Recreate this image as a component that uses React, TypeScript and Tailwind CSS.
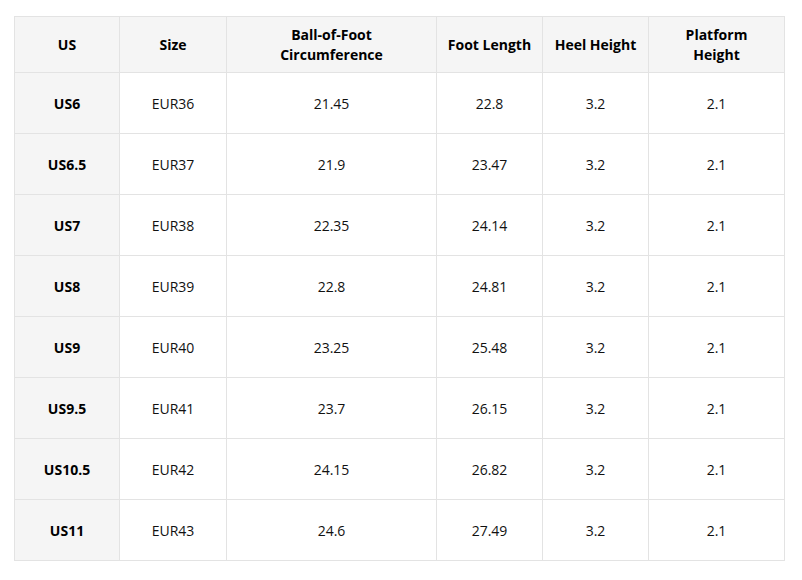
const rows = [
  ["US6", "EUR36", "21.45", "22.8", "3.2", "2.1"],
  ["US6.5", "EUR37", "21.9", "23.47", "3.2", "2.1"],
  ["US7", "EUR38", "22.35", "24.14", "3.2", "2.1"],
  ["US8", "EUR39", "22.8", "24.81", "3.2", "2.1"],
  ["US9", "EUR40", "23.25", "25.48", "3.2", "2.1"],
  ["US9.5", "EUR41", "23.7", "26.15", "3.2", "2.1"],
  ["US10.5", "EUR42", "24.15", "26.82", "3.2", "2.1"],
  ["US11", "EUR43", "24.6", "27.49", "3.2", "2.1"],
];

export default function App() {
  return (
    <div
      className="h-[580px] w-[802px] bg-white pl-[14px] pt-[16px]"
      style={{ fontFamily: '"Open Sans", "Noto Sans", sans-serif' }}
    >
      <table className="table-fixed border-collapse text-[14px] leading-[20px] text-[#111]">
        <colgroup>
          <col className="w-[105px]" />
          <col className="w-[107px]" />
          <col className="w-[210px]" />
          <col className="w-[106px]" />
          <col className="w-[106px]" />
          <col className="w-[136px]" />
        </colgroup>
        <thead>
          <tr className="h-[56px] bg-[#f5f5f5]">
            {["US", "Size", "Ball-of-Foot Circumference", "Foot Length", "Heel Height", "Platform Height"].map(
              (h, i) => (
                <th
                  key={h}
                  className={`border border-[#e3e3e3] px-2 text-center font-bold text-black ${
                    i === 2 ? "px-[40px]" : i === 5 ? "px-[30px]" : ""
                  }`}
                >
                  {h}
                </th>
              ),
            )}
          </tr>
        </thead>
        <tbody>
          {rows.map((r) => (
            <tr key={r[0]} className="h-[61px]">
              {r.map((c, i) => (
                <td
                  key={i}
                  className={`border border-[#e3e3e3] px-2 pt-[2px] text-center ${
                    i === 0 ? "bg-[#f5f5f5] font-bold text-black" : "bg-white"
                  }`}
                >
                  {c}
                </td>
              ))}
            </tr>
          ))}
        </tbody>
      </table>
    </div>
  );
}
